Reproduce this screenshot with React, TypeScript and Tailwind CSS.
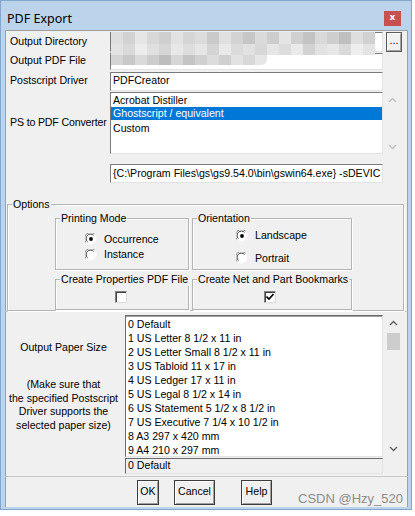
import React from "react";

const ui = "[font-family:'Liberation_Sans',Arial,sans-serif] text-[10.6px] text-black";

const mosaicA = [
  "bg-[#dedede]", "bg-[#d2d2d2]", "bg-[#e6e6e6]", "bg-[#d8d8d8]", "bg-[#cfcfcf]", "bg-[#e2e2e2]",
  "bg-[#d5d5d5]", "bg-[#dcdcdc]", "bg-[#cacaca]", "bg-[#e0e0e0]", "bg-[#d3d3d3]", "bg-[#c6c6c6]",
  "bg-[#dadada]", "bg-[#cdcdcd]", "bg-[#e4e4e4]", "bg-[#d0d0d0]", "bg-[#c3c3c3]", "bg-[#d9d9d9]",
  "bg-[#cecece]", "bg-[#bfbfbf]", "bg-[#dedede]", "bg-[#d1d1d1]",
];
const mosaicB = [
  "bg-[#e3e3e3]", "bg-[#d9d9d9]", "bg-[#ececec]", "bg-[#e0e0e0]", "bg-[#d6d6d6]", "bg-[#e8e8e8]",
  "bg-[#dddddd]", "bg-[#e5e5e5]", "bg-[#d4d4d4]", "bg-[#e9e9e9]", "bg-[#dbdbdb]", "bg-[#e1e1e1]",
  "bg-[#d7d7d7]", "bg-[#e6e6e6]", "bg-[#dcdcdc]", "bg-[#eaeaea]", "bg-[#d3d3d3]", "bg-[#e2e2e2]",
  "bg-[#e7e7e7]", "bg-[#dadada]", "bg-[#eeeeee]", "bg-[#e4e4e4]",
];
const mosaicC = [
  "bg-[#d4d4d4]", "bg-[#c8c8c8]", "bg-[#dadada]", "bg-[#cccccc]", "bg-[#bdbdbd]", "bg-[#d6d6d6]",
  "bg-[#c4c4c4]", "bg-[#d0d0d0]", "bg-[#dcdcdc]", "bg-[#cfcfcf]", "bg-[#e2e2e2]", "bg-[#d8d8d8]",
  "bg-[#e6e6e6]",
];

const paperSizes = [
  "0 Default",
  "1 US Letter 8 1/2 x 11 in",
  "2 US Letter Small 8 1/2 x 11 in",
  "3 US Tabloid 11 x 17 in",
  "4 US Ledger 17 x 11 in",
  "5 US Legal 8 1/2 x 14 in",
  "6 US Statement 5 1/2 x 8 1/2 in",
  "7 US Executive 7 1/4 x 10 1/2 in",
  "8 A3 297 x 420 mm",
  "9 A4 210 x 297 mm",
];

const Sunken = "border border-t-[#7a7a7a] border-l-[#7a7a7a] border-r-[#e3e3e3] border-b-[#e3e3e3] bg-white";

function Group({ label, className, children }: { label: string; className: string; children?: React.ReactNode }) {
  return (
    <div className={`relative border border-[#b4b4b4] shadow-[inset_1px_1px_0_#ffffff,1px_1px_0_#ffffff] ${className}`}>
      <span className="absolute left-[4px] -top-[8px] bg-[#f0f0f0] px-[1px] leading-[14px] whitespace-nowrap">{label}</span>
      {children}
    </div>
  );
}

function Radio({ checked }: { checked?: boolean }) {
  return (
    <svg width="12" height="12" viewBox="0 0 12 12" className="shrink-0">
      <circle cx="6" cy="6" r="5.5" fill="#ffffff" />
      <path d="M1.2 9.6 A5.5 5.5 0 0 1 9.6 1.2" fill="none" stroke="#8a8a8a" strokeWidth="1" />
      <path d="M2.4 8.6 A4.3 4.3 0 0 1 8.6 2.4" fill="none" stroke="#404040" strokeWidth="1" />
      <path d="M9.6 1.2 A5.5 5.5 0 0 1 1.2 9.6" fill="none" stroke="#f4f4f4" strokeWidth="1" />
      {checked && <circle cx="6" cy="6" r="1.9" fill="#000000" />}
    </svg>
  );
}

function Check({ checked }: { checked?: boolean }) {
  return (
    <div className="w-[12px] h-[12px] shrink-0 bg-white border border-t-[#808080] border-l-[#808080] border-r-[#dcdcdc] border-b-[#dcdcdc] shadow-[inset_1px_1px_0_#404040] flex items-center justify-center">
      {checked && (
        <svg width="8" height="8" viewBox="0 0 8 8">
          <path d="M0.5 3.5 L3 6 L7.5 1" fill="none" stroke="#000000" strokeWidth="1.6" />
        </svg>
      )}
    </div>
  );
}

function Chevron({ up, color }: { up?: boolean; color: string }) {
  return (
    <svg width="9" height="6" viewBox="0 0 9 6">
      <path d={up ? "M1 5 L4.5 1.5 L8 5" : "M1 1 L4.5 4.5 L8 1"} fill="none" stroke={color} strokeWidth="1.4" />
    </svg>
  );
}

function Button({ label, w }: { label: string; w: string }) {
  return (
    <div className={`${w} h-[25px] border border-[#3c3c3c] bg-[#f0f0f0] shadow-[inset_1px_1px_0_#ffffff,inset_-1px_-1px_0_#a0a0a0] flex items-center justify-center`}>
      {label}
    </div>
  );
}

export default function App() {
  return (
    <div className={`w-[415px] h-[516px] bg-white ${ui}`}>
      <div className="w-[412px] h-[510px] bg-[#bcd3ec] border border-[#86a6cc] flex flex-col">
        {/* title bar */}
        <div className="h-[29px] flex items-center justify-between pl-[6px] pr-[10px]">
          <span className="[font-family:'Noto_Sans',sans-serif] text-[12.5px] text-black mt-[7px]">PDF Export</span>
          <div className="w-[17px] h-[15px] bg-[#c75050] flex items-center justify-center mt-[5px]">
            <span className="[font-family:'DejaVu_Sans',sans-serif] text-[9px] font-bold text-white leading-none -mt-[2px]">x</span>
          </div>
        </div>

        {/* client */}
        <div className="ml-[4px] w-[403px] h-[477px] bg-[#f0f0f0] flex flex-col">
          {/* upper panel */}
          <div className="h-[282px] border border-[#a0a0a0] border-b-[#c8c8c8] flex flex-col relative">
            <div className="h-[21px] flex items-center">
              <div className="w-[104px] pl-[4px] whitespace-nowrap">Output Directory</div>
              <div className={`w-[273px] h-[20px] ${Sunken}`} />
              <div className="ml-[3px] w-[16px] h-[20px] border border-[#5a5a5a] bg-[#f0f0f0] shadow-[inset_1px_1px_0_#ffffff,inset_-1px_-1px_0_#a0a0a0] flex items-center justify-center leading-none pb-[3px]">...</div>
            </div>
            <div className="h-[18px] flex items-end">
              <div className="w-[104px] pl-[4px] self-center whitespace-nowrap">Output PDF File</div>
              <div className={`w-[273px] h-[17px] ${Sunken}`} />
            </div>
            <div className="h-[20px] mt-[1px] flex items-center">
              <div className="w-[104px] pl-[4px] whitespace-nowrap">Postscript Driver</div>
              <div className={`w-[273px] h-[19px] ${Sunken} flex items-center pl-[2px]`}>PDFCreator</div>
            </div>
            <div className="h-[62px] mt-[1px] flex">
              <div className="w-[104px] pl-[4px] self-center whitespace-nowrap tracking-[-0.15px]">PS to PDF Converter</div>
              <div className={`w-[273px] h-[62px] ${Sunken} flex flex-col`}>
                <div className="h-[14px] leading-[14px] pl-[2px]">Acrobat Distiller</div>
                <div className="h-[13px] leading-[13px] pl-[2px] bg-[#0078d7] text-white">Ghostscript / equivalent</div>
                <div className="h-[14px] leading-[14px] pl-[2px] mt-[1px]">Custom</div>
              </div>
              <div className="w-[19px] flex flex-col items-center justify-between pt-[5px] pb-[4px]">
                <Chevron up color="#c2c2c2" />
                <Chevron color="#c2c2c2" />
              </div>
            </div>
            <div className="h-[19px] mt-[10px] flex">
              <div className="w-[104px]" />
              <div className={`w-[273px] h-[19px] ${Sunken} flex items-center pl-[2px] whitespace-nowrap`}>
                {"{C:\\Program Files\\gs\\gs9.54.0\\bin\\gswin64.exe} -sDEVIC"}
              </div>
            </div>

            {/* options */}
            <Group label="Options" className="ml-[1px] mt-[21px] w-[397px] h-[107px]">
              <div className="flex ml-[47px] mt-[13px]">
                <Group label="Printing Mode" className="w-[134px] h-[52px]">
                  <div className="flex flex-col pl-[29px] pt-[13px] gap-[2px]">
                    <div className="h-[14px] flex items-center gap-[7px]"><Radio checked /><span className="mt-[2px]">Occurrence</span></div>
                    <div className="h-[14px] flex items-center gap-[7px]"><Radio /><span>Instance</span></div>
                  </div>
                </Group>
                <Group label="Orientation" className="ml-[3px] w-[160px] h-[52px]">
                  <div className="flex flex-col pl-[43px] pt-[10px] gap-[8px]">
                    <div className="h-[14px] flex items-center gap-[7px]"><Radio checked /><span>Landscape</span></div>
                    <div className="h-[14px] flex items-center gap-[7px]"><Radio /><span className="mt-[2px]">Portrait</span></div>
                  </div>
                </Group>
              </div>
              <div className="flex ml-[47px] mt-[9px]">
                <Group label="Create Properties PDF File" className="w-[134px] h-[31px]">
                  <div className="flex justify-center pt-[11px] pr-[2px]"><Check /></div>
                </Group>
                <Group label="Create Net and Part Bookmarks" className="ml-[3px] w-[160px] h-[31px]">
                  <div className="flex justify-center pt-[11px] pr-[5px]"><Check checked /></div>
                </Group>
              </div>
            </Group>

            {/* blurred paths */}
            <div className="absolute left-[105px] top-[1px] w-[270px] flex flex-col">
              <div className="flex h-[12px]">
                {mosaicA.map((c, i) => <div key={i} className={`w-[12px] h-full ${c}`} />)}
              </div>
              <div className="flex h-[11px] rounded-br-[6px] rounded-tr-[6px] overflow-hidden">
                {mosaicB.map((c, i) => <div key={i} className={`w-[12px] h-full ${c}`} />)}
              </div>
              <div className="flex h-[10px] w-[156px] rounded-br-[6px] overflow-hidden">
                {mosaicC.map((c, i) => <div key={i} className={`w-[12px] h-full ${c}`} />)}
              </div>
            </div>
          </div>

          {/* paper size panel */}
          <div className="h-[165px] border-x border-[#a0a0a0] border-b border-b-[#c8c8c8] flex">
            <div className="w-[119px] flex flex-col items-center text-center pr-[4px]">
              <div className="mt-[28px] leading-[14px] whitespace-nowrap">Output Paper Size</div>
              <div className="mt-[24px] leading-[13.5px] whitespace-nowrap">
                (Make sure that<br />the specified Postscript<br />Driver supports the<br />selected paper size)
              </div>
            </div>
            <div className="flex flex-col mt-[3px]">
              <div className="flex">
                <div className="w-[258px] h-[142px] bg-white border border-t-[#6a6a6a] border-l-[#6a6a6a] border-r-[#e3e3e3] border-b-[#e3e3e3] shadow-[inset_0_1px_0_#a0a0a0] flex flex-col pl-[2px] pt-[1px]">
                  {paperSizes.map((p) => (
                    <div key={p} className="h-[14px] leading-[14px] whitespace-nowrap">{p}</div>
                  ))}
                </div>
                <div className="w-[19px] h-[142px] flex flex-col items-center pl-[2px]">
                  <div className="mt-[5px]"><Chevron up color="#606060" /></div>
                  <div className="mt-[7px] w-[13px] h-[17px] bg-[#cdcdcd]" />
                  <div className="mt-auto mb-[5px]"><Chevron color="#606060" /></div>
                </div>
              </div>
              <div className="mt-[1px] w-[258px] h-[16px] border border-t-[#6a6a6a] border-l-[#6a6a6a] border-r-[#e3e3e3] border-b-[#e3e3e3] bg-[#f0f0f0] flex items-center pl-[2px]">
                0 Default
              </div>
            </div>
          </div>

          {/* buttons */}
          <div className="h-[30px] border-x border-[#a0a0a0] relative flex items-center">
            <div className="ml-[131px]"><Button label="OK" w="w-[22px]" /></div>
            <div className="ml-[15px]"><Button label="Cancel" w="w-[41px]" /></div>
            <div className="ml-[26px]"><Button label="Help" w="w-[31px]" /></div>
            <span className="absolute right-[4px] bottom-[2px] [font-family:'Liberation_Sans',Arial,sans-serif] text-[13px] text-[#8c8c8c] leading-none">CSDN @Hzy_520</span>
          </div>
        </div>
      </div>
    </div>
  );
}
